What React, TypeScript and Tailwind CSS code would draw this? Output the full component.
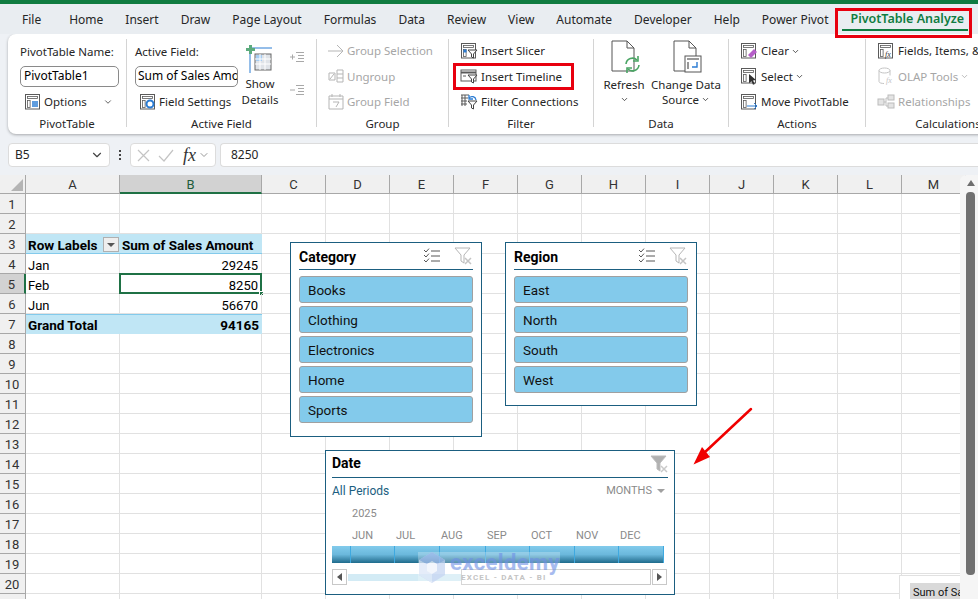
import { ChevronDown } from "lucide-react";
import type { ReactNode } from "react";

const TABS = ["Home", "Insert", "Draw", "Page Layout", "Formulas", "Data", "Review", "View", "Automate", "Developer", "Help", "Power Pivot"];
const COLS = [
  { name: "A", w: "w-[94px]" },
  { name: "B", w: "w-[142px]" },
  { name: "C", w: "w-[64px]" },
  { name: "D", w: "w-[64px]" },
  { name: "E", w: "w-[64px]" },
  { name: "F", w: "w-[64px]" },
  { name: "G", w: "w-[64px]" },
  { name: "H", w: "w-[64px]" },
  { name: "I", w: "w-[64px]" },
  { name: "J", w: "w-[64px]" },
  { name: "K", w: "w-[64px]" },
  { name: "L", w: "w-[64px]" },
  { name: "M", w: "w-[64px]" },
];
const ROWS = Array.from({ length: 21 }, (_, i) => i + 1);
const MONTHS = [
  { name: "JUN", w: "w-[44px]" },
  { name: "JUL", w: "w-[45px]" },
  { name: "AUG", w: "w-[46px]" },
  { name: "SEP", w: "w-[44px]" },
  { name: "OCT", w: "w-[45px]" },
  { name: "NOV", w: "w-[44px]" },
  { name: "DEC", w: "w-[44px]" },
];

// pivot frame that most of the ribbon icons share
const Frame = ({ children, gray }: { children?: ReactNode; gray?: boolean }) => {
  const c = gray ? "#c4c4c4" : "#5a5a5a";
  return (
    <svg width="18" height="18" viewBox="0 0 18 18" fill="none" className="shrink-0">
      <rect x="1.5" y="1.5" width="14" height="14.5" fill="#fff" stroke={c} />
      <rect x="3.5" y="3.5" width="10" height="2" fill="#fff" stroke={c} strokeWidth="0.8" />
      <rect x="3.5" y="7.5" width="2.6" height="7" fill="#fff" stroke={c} strokeWidth="0.8" />
      {children}
    </svg>
  );
};

const Funnel = ({ x = 8, y = 8, c = "#444" }: { x?: number; y?: number; c?: string }) => (
  <path d={`M${x} ${y}h9l-3.5 4v4l-2 -1v-3z`} fill="#fff" stroke={c} strokeWidth="1" />
);

const ListIcon = ({ minus }: { minus?: boolean }) => (
  <svg width="16" height="14" viewBox="0 0 16 14" fill="none" stroke="#a8a8a8">
    <path d="M7 2.5h8M9 5.5h6M9 8.5h6M7 11.5h8" />
    {minus ? <path d="M1 7h5" /> : <path d="M1 7h5M3.5 4.5v5" />}
  </svg>
);

const ClearFilter = ({ solid }: { solid?: boolean }) => (
  <svg width="18" height="18" viewBox="0 0 18 18" fill="none">
    <path d="M1 1h15l-6 7v8l-3-2V8z" fill={solid ? "#a9a9a9" : "#fff"} stroke="#b5b5b5" />
    <path d="M11 11l6 6M17 11l-6 6" stroke="#c4c4c4" strokeWidth="1.5" />
  </svg>
);

const MultiSelect = () => (
  <svg width="17" height="16" viewBox="0 0 17 16" fill="none" stroke="#444" strokeWidth="0.9">
    <path d="M1 2l2 2 3-3.4M1 7l2 2 3-3.4M1 12l2 2 3-3.4M8 3h9M8 8h9M8 13h9" />
  </svg>
);

const DocIcon = ({ children }: { children?: ReactNode }) => (
  <svg width="30" height="34" viewBox="0 0 30 34" fill="none" className="ml-[4px] shrink-0">
    <path d="M1 1h15l7 7v23H1z" fill="#fff" stroke="#555" />
    <path d="M16 1v7h7" stroke="#555" />
    {children}
  </svg>
);

const RibbonRow = ({ icon, label, gray, chevron }: { icon: ReactNode; label: string; gray?: boolean; chevron?: boolean }) => (
  <div className={`flex h-[25.5px] items-center gap-[3px] whitespace-nowrap ${gray ? "text-[#a6a6a6]" : "text-[#262626]"}`}>
    {icon}
    <span>{label}</span>
    {chevron && <ChevronDown size={9} strokeWidth={2} className="mt-px -ml-[1px]" />}
  </div>
);

const Group = ({ label, className, children }: { label: string; className: string; children: ReactNode }) => (
  <div className={`relative flex h-full shrink-0 flex-col ${className}`}>
    <div className="relative h-[81px] pt-[4px]">{children}</div>
    <div className="flex h-[18px] items-center justify-center text-[#262626]">{label}</div>
  </div>
);

const Sep = () => <div className="mt-[5px] h-[88px] w-px shrink-0 bg-[#d4d4d4]" />;

const Slicer = ({ title, items, className }: { title: string; items: string[]; className: string }) => (
  <div className={`absolute w-[192px] border border-[#1b5e80] bg-white px-2 ${className}`}>
    <div className="flex h-[27px] items-center justify-between border-b border-[#1b5e80] pr-[1px] text-[14px] font-bold text-black">
      <span className="pt-[2px]">{title}</span>
      <div className="flex items-center gap-[14px]">
        <MultiSelect />
        <ClearFilter />
      </div>
    </div>
    <div className="flex flex-col gap-[3px] pt-[6px]">
      {items.map((item) => (
        <div key={item} className="flex h-[27px] items-center rounded-[3px] border border-[#a0a0a0] bg-[#83caeb] pt-px pl-[8px] text-[13.5px] text-[#111]">
          {item}
        </div>
      ))}
    </div>
  </div>
);

const Timeline = () => (
  <div className="absolute top-[256px] left-[325px] h-[145px] w-[350px] border border-[#1b5e80] bg-white px-[6px] text-[11px] text-[#8a8a8a]">
    <div className="flex h-[27px] items-center justify-between border-b border-[#1b5e80] text-[14px] font-bold text-black">
      <span className="-mt-px">Date</span>
      <span className="-mt-px opacity-90">
        <ClearFilter solid />
      </span>
    </div>
    <div className="flex h-[26px] items-center justify-between pr-[3px]">
      <span className="text-[12px] text-[#1b5e80]">All Periods</span>
      <span className="flex items-center gap-[5px]">
        MONTHS
        <span className="h-0 w-0 border-x-[4px] border-t-[4px] border-x-transparent border-t-[#a0a0a0]" />
      </span>
    </div>
    <div className="pl-[20px] leading-[19px]">2025</div>
    <div className="flex pt-[3px] pl-[20px] leading-[19px]">
      {MONTHS.map((m) => (
        <span key={m.name} className={m.w}>
          {m.name}
        </span>
      ))}
    </div>
    <div className="mt-[1px] flex h-[17px] w-[332px] border-r border-[#3fa9e0] bg-gradient-to-b from-[#82cbec] via-[#6bb8dc] to-[#1d6b8c] pl-[18px]">
      {MONTHS.map((m) => (
        <div key={m.name} className={`${m.w} border-l border-[#3fa9e0]`} />
      ))}
    </div>
    <div className="mt-[6px] flex h-[16px] w-[335px] items-center">
      <div className="flex h-full w-[15px] items-center justify-center border border-[#c8c8c8]">
        <span className="h-0 w-0 border-y-[4px] border-r-[5px] border-y-transparent border-r-[#555]" />
      </div>
      <div className="ml-[1px] h-[7px] w-[113px] bg-[#d3ebf5]" />
      <div className="h-full w-[190px] border border-[#c8c8c8]" />
      <div className="ml-auto flex h-full w-[15px] items-center justify-center border border-[#c8c8c8]">
        <span className="h-0 w-0 border-y-[4px] border-l-[5px] border-y-transparent border-l-[#555]" />
      </div>
    </div>
    {/* watermark */}
    <div className="absolute top-[101px] left-[92px] flex h-[33px] w-[142px] items-start bg-white/25">
      <svg width="28" height="31" viewBox="0 0 28 31" className="shrink-0 opacity-70">
        <path d="M14 0l13 8v15l-13 8L1 23V8z" fill="#c3d3f2" />
        <path d="M14 0l13 8-13 7L1 8z" fill="#9db8ea" />
        <path d="M14 15v16L1 23V8z" fill="#dbe5f7" />
        <path d="M9 12l5-3 5 3v7l-5 3-5-3z" fill="#eef3fb" />
      </svg>
      <div className="ml-[4px] flex flex-col items-start">
        <span className="text-[22px] leading-[21px] font-bold tracking-[0.4px] text-[#6e8fe6] opacity-60">exceldemy</span>
        <span className="ml-[11px] text-[8px] leading-[10px] font-bold tracking-[1.2px] whitespace-nowrap text-[#c4c4c4]">EXCEL - DATA - BI</span>
      </div>
    </div>
  </div>
);

const Cell = ({ r, c }: { r: number; c: number }) => {
  const base = "relative flex h-full shrink-0 items-center border-b border-[#e1e1e1] px-[2px] text-black whitespace-nowrap";
  const plain = `${base} border-r pt-[4px]`;
  const pivot = `${base} bg-[#c0e6f5] pt-[3px] text-[13.5px] font-bold`;
  const w = COLS[c].w;
  if (c === 0) {
    if (r === 3)
      return (
        <div className={`${pivot} ${w} border-b-[#83caeb]`}>
          <span>Row Labels</span>
          <span className="absolute top-[3px] right-[1px] flex h-[15px] w-[16px] items-center justify-center border border-[#b0b0b0] bg-[#eeeeee]">
            <span className="h-0 w-0 border-x-[4px] border-t-[4px] border-x-transparent border-t-[#555]" />
          </span>
        </div>
      );
    if (r === 7) return <div className={`${pivot} ${w} border-b-0 shadow-[inset_0_1px_0_#83caeb]`}>Grand Total</div>;
    if (r === 4) return <div className={`${plain} ${w}`}>Jan</div>;
    if (r === 5) return <div className={`${plain} ${w}`}>Feb</div>;
    if (r === 6) return <div className={`${plain} ${w}`}>Jun</div>;
  }
  if (c === 1) {
    if (r === 3) return <div className={`${pivot} ${w} border-b-[#83caeb]`}>Sum of Sales Amount</div>;
    if (r === 4) return <div className={`${plain} ${w} justify-end pr-[3px]`}>29245</div>;
    if (r === 5)
      return (
        <div className={`${plain} ${w} justify-end pr-[3px]`}>
          8250
          <div className="absolute -top-px -right-px -bottom-px -left-px border-2 border-[#1f7145]" />
          <div className="absolute -right-[3px] -bottom-[3px] h-[5px] w-[5px] border border-white bg-[#1f7145]" />
        </div>
      );
    if (r === 6) return <div className={`${plain} ${w} justify-end pr-[3px]`}>56670</div>;
    if (r === 7) return <div className={`${pivot} ${w} justify-end border-b-0 pr-[3px] shadow-[inset_0_1px_0_#83caeb]`}>94165</div>;
  }
  return <div className={`${plain} ${w}`} />;
};

export default function App() {
  return (
    <div className="relative flex h-[599px] w-[978px] flex-col overflow-hidden bg-[#eef1f5] font-['Noto_Sans',sans-serif] text-[11.5px]">
      <div className="h-[4px] shrink-0 bg-[#107c41]" />

      {/* tabs */}
      <div className="relative flex h-[30px] shrink-0 items-center gap-[22px] bg-[#e9edf1] pt-[1px] pl-[22px] text-[12px] text-[#262626]">
        <span className="mr-[6px]">File</span>
        {TABS.map((t) => (
          <span key={t} className="whitespace-nowrap">
            {t}
          </span>
        ))}
        <span className="text-[12.5px] font-semibold whitespace-nowrap text-[#107c41]">PivotTable Analyze</span>
        <div className="absolute top-[25px] left-[842px] h-[2px] w-[126px] bg-[#107c41]" />
      </div>

      {/* ribbon */}
      <div className="ml-[8px] flex h-[100px] w-[990px] shrink-0 rounded-l-[8px] bg-white shadow-[0_1px_3px_rgba(0,0,0,0.3)]">
        <Group label="PivotTable" className="w-[118px]">
          <div className="flex h-[26px] items-center pt-[1px] pl-[12px] text-[#262626]">PivotTable Name:</div>
          <div className="mt-[1.5px] ml-[12px] flex h-[21px] w-[99px] items-center rounded-[5px] border border-[#8a8a8a] px-[3px] text-[12px] text-black">PivotTable1</div>
          <div className="mt-[3px] flex h-[25px] items-center pl-[16px]">
            <Frame>
              <rect x="8" y="8" width="6" height="6" fill="#2b7cd3" opacity="0.75" />
            </Frame>
            <span className="ml-[2px] text-[#262626]">Options</span>
            <ChevronDown size={10} className="ml-[16px] text-[#444]" />
          </div>
        </Group>
        <Sep />
        <Group label="Active Field" className="w-[189px]">
          <div className="flex h-[26px] items-center pt-[1px] pl-[8px] text-[#262626]">Active Field:</div>
          <div className="mt-[1.5px] ml-[8px] flex h-[21px] w-[103px] items-center overflow-hidden rounded-[5px] border border-[#8a8a8a] px-[2px] text-[12px] whitespace-nowrap text-black">Sum of Sales Amount</div>
          <div className="mt-[3px] flex h-[25px] items-center pl-[12px]">
            <Frame>
              <circle cx="11" cy="11" r="3.5" fill="none" stroke="#2b7cd3" strokeWidth="2" />
            </Frame>
            <span className="ml-[2px] text-[#262626]">Field Settings</span>
          </div>
          <div className="absolute top-[9px] left-[109px] flex w-[48px] flex-col items-center text-center leading-[16px] text-[#262626]">
            <svg width="30" height="31" viewBox="0 0 30 31" fill="none" className="mb-[2px]">
              <path d="M4 5h23M5 7v23" stroke="#2b7cd3" />
              <path d="M4 2h3v3h3v3H7v3H4V8H1V5h3z" fill="#5cab7d" />
              <rect x="10" y="11" width="16" height="16" fill="#dfe3e8" stroke="#666" />
              <rect x="11" y="12" width="6" height="6" fill="#a6cdf2" />
              <path d="M15 11v16M20 11v16M10 16h16M10 21h16" stroke="#fff" />
            </svg>
            <span>Show</span>
            <span>Details</span>
          </div>
          <div className="absolute top-[16px] left-[162px]">
            <ListIcon />
          </div>
          <div className="absolute top-[49px] left-[162px]">
            <ListIcon minus />
          </div>
        </Group>
        <Sep />
        <Group label="Group" className="w-[131px]">
          <div className="pl-[11px]">
            <RibbonRow
              gray
              label="Group Selection"
              icon={
                <svg width="16" height="14" viewBox="0 0 16 14" fill="none" stroke="#b5b5b5">
                  <path d="M0 7h15M9 1l6 6-6 6" />
                </svg>
              }
            />
            <RibbonRow
              gray
              label="Ungroup"
              icon={
                <svg width="16" height="14" viewBox="0 0 16 14" fill="none" stroke="#b5b5b5">
                  <path d="M1 4h6v7H1zM9 1h6v12H9zM9 5h6M9 9h6M2 10l4-5" />
                </svg>
              }
            />
            <RibbonRow
              gray
              label="Group Field"
              icon={
                <svg width="16" height="16" viewBox="0 0 16 16" fill="none" stroke="#b5b5b5">
                  <path d="M1 2h14v13H1zM1 5h14M4 0v3M12 0v3M5 8h6l-3 5" />
                </svg>
              }
            />
          </div>
        </Group>
        <Sep />
        <Group label="Filter" className="w-[144px]">
          <div className="pl-[11px]">
            <RibbonRow
              label="Insert Slicer"
              icon={
                <Frame>
                  <rect x="3.5" y="7.5" width="3" height="3" fill="#2b7cd3" />
                  <Funnel />
                </Frame>
              }
            />
            <RibbonRow
              label="Insert Timeline"
              icon={
                <svg width="18" height="18" viewBox="0 0 18 18" fill="none">
                  <rect x="1" y="3" width="15" height="11" fill="#fff" stroke="#5a5a5a" />
                  <path d="M1 5.5h15" stroke="#5a5a5a" strokeWidth="2" />
                  <path d="M3 9h3" stroke="#5a5a5a" />
                  <Funnel />
                </svg>
              }
            />
            <RibbonRow
              label="Filter Connections"
              icon={
                <svg width="18" height="18" viewBox="0 0 18 18" fill="none">
                  <path d="M1 2h8M1 5h7M1 8h6M1 11h6M2 2v11M5 2v11" stroke="#5a5a5a" />
                  <path d="M9 5a4 4 0 0 1 7 2" stroke="#2b7cd3" strokeWidth="1.3" />
                  <path d="M9 2v4h4" stroke="#2b7cd3" strokeWidth="1.3" />
                  <Funnel />
                </svg>
              }
            />
          </div>
        </Group>
        <Sep />
        <Group label="Data" className="w-[134px]">
          <div className="absolute top-[6px] left-[7px] flex w-[46px] flex-col items-center leading-[15px] text-[#262626]">
            <DocIcon>
              <path d="M15 24a6.5 6.5 0 0 1 11-4M28 25a6.5 6.5 0 0 1-11 4" stroke="#4aa564" strokeWidth="1.6" />
              <path d="M27 16v5h-5M16 33v-5h5" stroke="#4aa564" strokeWidth="1.6" />
            </DocIcon>
            <span className="mt-[3px]">Refresh</span>
            <ChevronDown size={9} className="mt-[3px]" />
          </div>
          <div className="absolute top-[6px] left-[53px] flex w-[78px] flex-col items-center leading-[15px] text-[#262626]">
            <DocIcon>
              <rect x="12" y="16" width="16" height="16" fill="#fff" stroke="#555" />
              <path d="M14 19h12M15 22v7" stroke="#777" strokeWidth="1.5" />
              <path d="M24 22v5h-5" stroke="#2b7cd3" strokeWidth="1.4" />
            </DocIcon>
            <span className="mt-[3px] whitespace-nowrap">Change Data</span>
            <span className="flex items-center gap-[2px]">
              Source
              <ChevronDown size={9} />
            </span>
          </div>
        </Group>
        <Sep />
        <Group label="Actions" className="w-[136px]">
          <div className="pl-[11px]">
            <RibbonRow
              chevron
              label="Clear"
              icon={
                <Frame>
                  <path d="M8 13l6-6 3 3-6 6z" fill="#b55fc8" />
                </Frame>
              }
            />
            <RibbonRow
              chevron
              label="Select"
              icon={
                <Frame>
                  <path d="M9 7l7 6-3 .5 2 3.5-2 .8-1.500-3.500-2.500 2z" fill="#333" />
                </Frame>
              }
            />
            <RibbonRow
              label="Move PivotTable"
              icon={
                <Frame>
                  <path d="M7 13h10M14 10l3 3-3 3" stroke="#2b7cd3" fill="none" />
                </Frame>
              }
            />
          </div>
        </Group>
        <Sep />
        <Group label="Calculations" className="w-[164px]">
          <div className="pl-[11px]">
            <RibbonRow
              label="Fields, Items, & Sets"
              icon={
                <Frame>
                  <text x="8" y="15" fontSize="8" fontStyle="italic" fontFamily="Liberation Serif" fill="#333">
                    fx
                  </text>
                </Frame>
              }
            />
            <RibbonRow
              gray
              chevron
              label="OLAP Tools"
              icon={
                <svg width="18" height="18" viewBox="0 0 18 18" fill="none" stroke="#c4c4c4">
                  <ellipse cx="7.500" cy="3.500" rx="5.500" ry="2.500" />
                  <path d="M2 3.500v11c0 1.500 3 2 5 2M13 3.500v5" />
                  <text x="9" y="16" fontSize="8" fontStyle="italic" fontFamily="Liberation Serif" fill="#c4c4c4" stroke="none">
                    fx
                  </text>
                </svg>
              }
            />
            <RibbonRow
              gray
              label="Relationships"
              icon={
                <svg width="18" height="16" viewBox="0 0 18 16" fill="#e4e4e4" stroke="#bcbcbc">
                  <rect x="1" y="5" width="6" height="6" />
                  <rect x="11" y="1" width="6" height="5" />
                  <rect x="11" y="9" width="6" height="5" />
                  <path d="M7 8h2M9 4v8M9 4h2M9 12h2" />
                </svg>
              }
            />
          </div>
        </Group>
      </div>

      {/* formula bar */}
      <div className="mt-[9px] flex h-[24px] shrink-0 items-center pl-[8px] text-[12px] text-[#262626]">
        <div className="flex h-full w-[102px] items-center justify-between rounded-[4px] border border-[#dcdcdc] bg-white pr-[5px] pl-[6px]">
          B5
          <ChevronDown size={14} className="text-[#444]" />
        </div>
        <div className="flex w-[20px] flex-col items-center gap-[2px]">
          <span className="h-[2px] w-[2px] bg-[#444]" />
          <span className="h-[2px] w-[2px] bg-[#444]" />
          <span className="h-[2px] w-[2px] bg-[#444]" />
        </div>
        <div className="flex h-full w-[86px] items-center rounded-[4px] border border-[#dcdcdc] bg-white pl-[6px]">
          <svg width="13" height="13" viewBox="0 0 13 13" fill="none" stroke="#c4c4c4" strokeWidth="1.2">
            <path d="M1 1l11 11M12 1L1 12" />
          </svg>
          <svg width="16" height="13" viewBox="0 0 16 13" fill="none" stroke="#c4c4c4" strokeWidth="1.2" className="ml-[8px]">
            <path d="M1 7l5 5L15 1" />
          </svg>
          <span className="ml-[9px] font-['Liberation_Serif',serif] text-[18px] leading-none text-[#333] italic">fx</span>
          <ChevronDown size={12} className="ml-[2px] text-[#999]" />
        </div>
        <div className="ml-[4px] flex h-full flex-1 items-center rounded-l-[4px] border border-r-0 border-[#dcdcdc] bg-white pl-[10px]">8250</div>
      </div>

      {/* sheet */}
      <div className="mt-[8px] flex min-h-0 flex-1 flex-col font-['Roboto',sans-serif] text-[13px]">
        <div className="flex h-[19px] shrink-0 bg-[#f0f0f0] text-[#333]">
          <div className="flex w-[26px] shrink-0 items-end justify-end border-r border-b border-[#a8a8a8] p-[2px]">
            <span className="h-0 w-0 border-b-[12px] border-l-[12px] border-b-[#b4b4b4] border-l-transparent" />
          </div>
          {COLS.map((col) => (
            <div
              key={col.name}
              className={`flex shrink-0 items-center justify-center border-r pt-[2px] ${col.w} ${
                col.name === "B" ? "border-b-2 border-r-[#a8a8a8] border-b-[#1f7145] bg-[#d2d2d2] text-[#1f5c3c]" : "border-b border-[#a8a8a8]"
              }`}
            >
              {col.name}
            </div>
          ))}
          <div className="flex-1 bg-[#f5f5f5]" />
        </div>
        <div className="flex min-h-0 flex-1 flex-col bg-white">
          {ROWS.map((r) => (
            <div key={r} className="flex h-[20px] shrink-0">
              <div
                className={`flex w-[26px] shrink-0 items-center justify-center border-b border-[#a8a8a8] pt-[3px] pr-[1px] text-[#333] ${
                  r === 5 ? "border-r-2 border-r-[#1f7145] bg-[#d2d2d2] text-[#1f5c3c]" : "border-r bg-[#f0f0f0]"
                }`}
              >
                {r}
              </div>
              {COLS.map((_, c) => (
                <Cell key={c} r={r} c={c} />
              ))}
              <div className="flex-1 bg-[#f5f5f5]" />
            </div>
          ))}
        </div>
      </div>

      {/* scrollbar */}
      <div className="absolute top-[175px] left-[960px] flex h-[424px] w-[18px] flex-col items-center rounded-t-[6px] bg-[#f5f5f5] pt-[5px] pl-[3px]">
        <span className="h-0 w-0 border-x-[4.5px] border-b-[6px] border-x-transparent border-b-[#6e6e6e]" />
        <div className="mt-[6px] h-[383px] w-[9px] rounded-[4px] bg-[#707070]" />
      </div>

      {/* floating objects on the sheet */}
      <div className="absolute inset-x-0 top-[194px] bottom-0 font-['Roboto',sans-serif]">
        <Slicer title="Category" items={["Books", "Clothing", "Electronics", "Home", "Sports"]} className="top-[48px] left-[290px] h-[195px]" />
        <Slicer title="Region" items={["East", "North", "South", "West"]} className="top-[48px] left-[505px] h-[164px]" />
        <Timeline />
        <div className="absolute top-[381px] left-[899px] h-[30px] w-[61px] border-t border-l border-[#e1e1e1] bg-white pt-[7px] pl-[10px]">
          <div className="h-[20px] overflow-hidden bg-[#d9d9d9] pt-px pl-[3px] text-[11px] leading-[17px] whitespace-nowrap text-[#111]">Sum of Sales</div>
        </div>
        <svg width="70" height="70" viewBox="0 0 70 70" fill="none" className="absolute top-[208px] left-[690px]">
          <path d="M61 7L14 51" stroke="#f00000" strokeWidth="2.500" strokeLinecap="round" />
          <path d="M3.500 62.500L12 45l8 10z" fill="#f00000" />
        </svg>
      </div>

      {/* red callouts */}
      <div className="absolute top-[8px] left-[835px] h-[30px] w-[137px] border-[3px] border-[#e8000f]" />
      <div className="absolute top-[63px] left-[453px] h-[27px] w-[121px] border-[3px] border-[#e8000f]" />
    </div>
  );
}
